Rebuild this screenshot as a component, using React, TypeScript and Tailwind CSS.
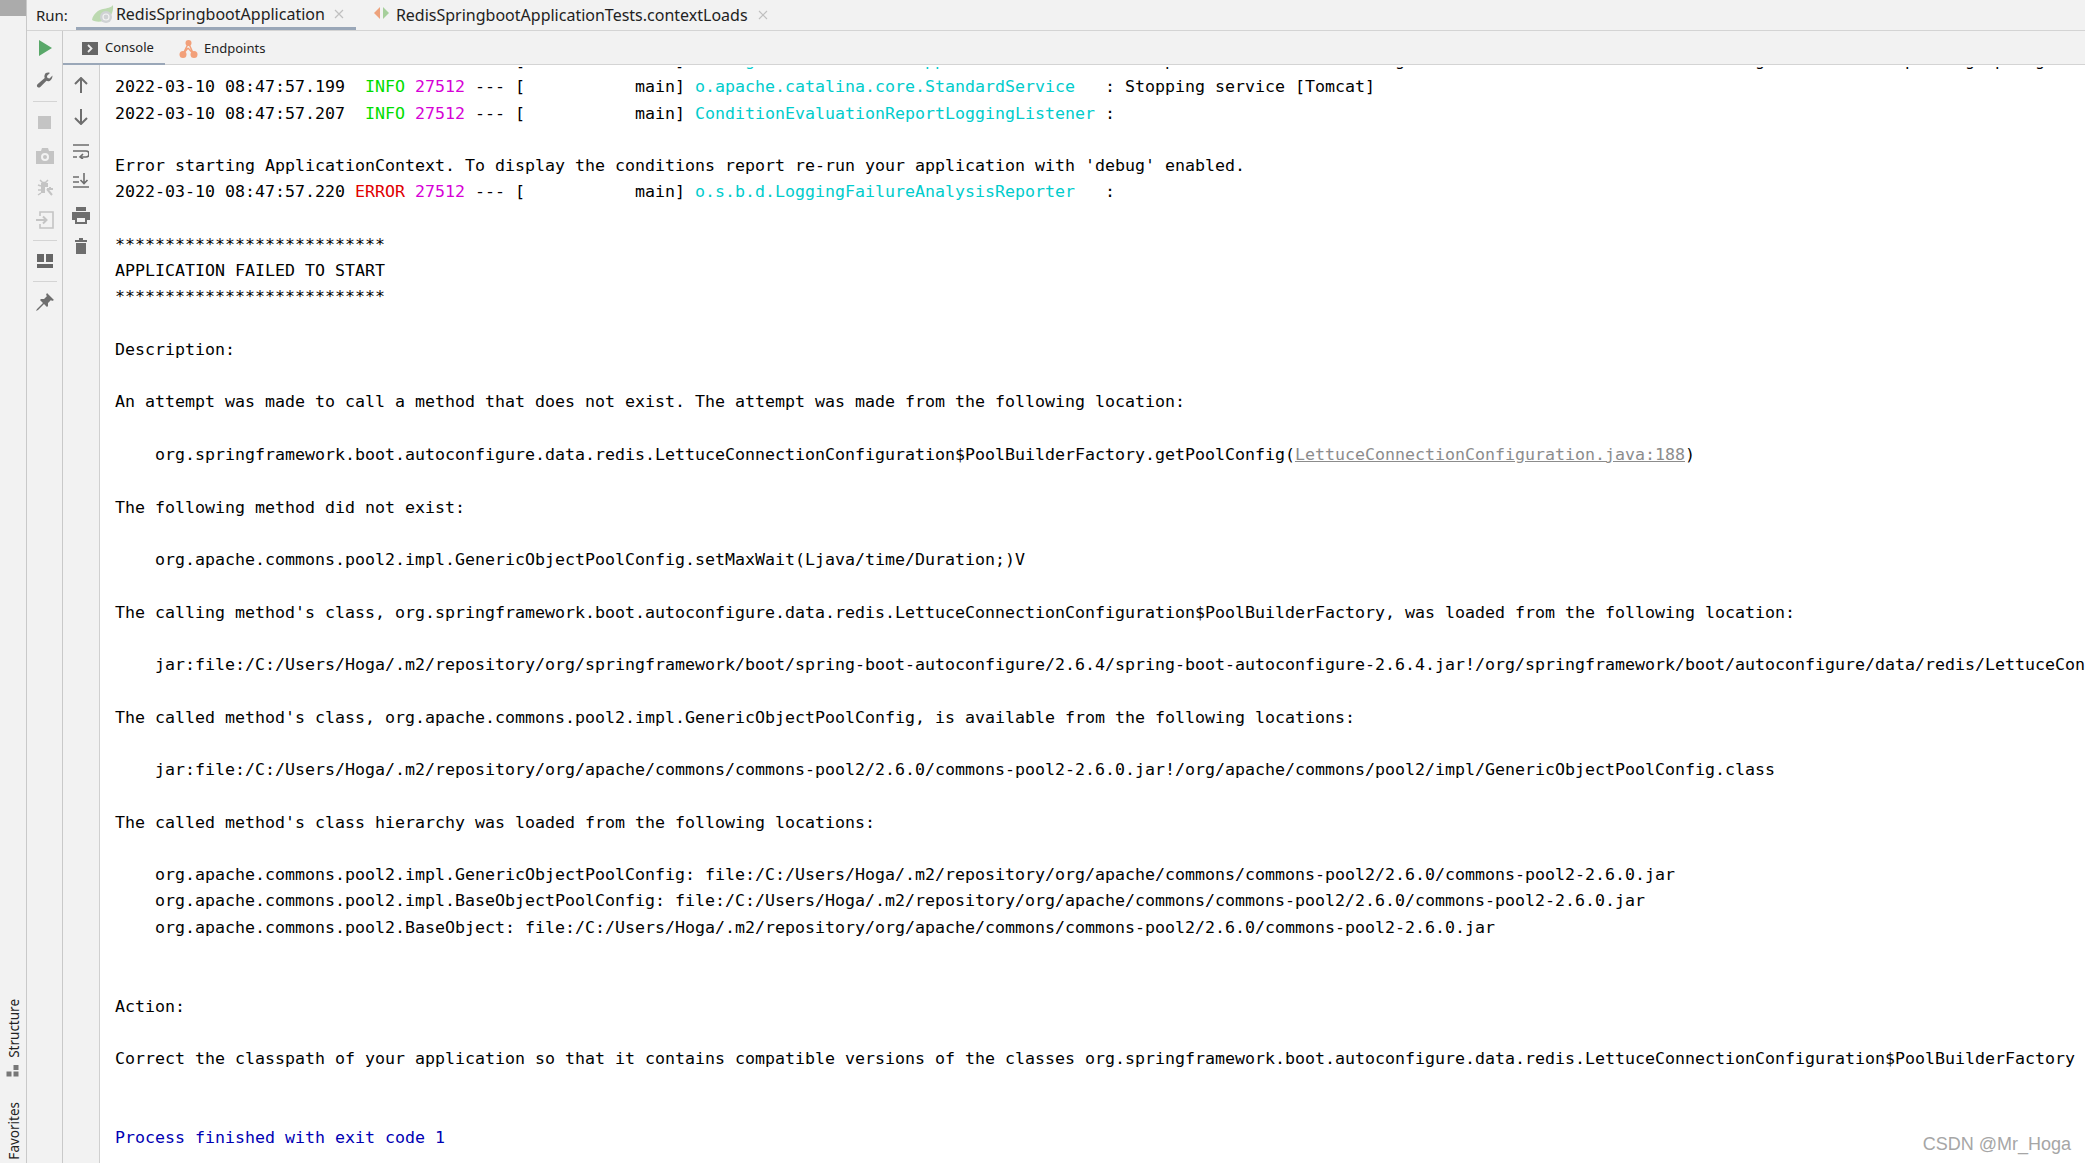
import type { ReactNode } from "react";

const ui = "font-['Noto_Sans',sans-serif]";

function Sep() {
  return <div className="w-6 h-px bg-[#d4d4d4]" />;
}

function Tab({ icon, label }: { icon: ReactNode; label: string }) {
  return (
    <div className="flex items-center h-full">
      {icon}
      <span className="text-[16px] text-[#222]">{label}</span>
    </div>
  );
}

function CloseX({ className }: { className: string }) {
  return (
    <svg width="10" height="10" viewBox="0 0 10 10" className={className} fill="none" stroke="#c0c0c0" strokeWidth="1.2">
      <path d="M1 1l8 8M9 1l-8 8" />
    </svg>
  );
}

function LogLine({ time, level, levelColor, logger, msg }: { time: string; level: string; levelColor: string; logger: string; msg: string }) {
  return (
    <div>
      {time} <span className={levelColor}>{level}</span> <span className="text-[#d600d6]">27512</span> --- [           main] <span className="text-[#00cccc]">{logger}</span>{msg}
    </div>
  );
}

const Blank = () => <div>&nbsp;</div>;

export default function App() {
  return (
    <div className={`relative flex w-[2085px] h-[1163px] overflow-hidden bg-white ${ui}`}>
      {/* tool window stripe */}
      <div className="w-[27px] shrink-0 flex flex-col bg-[#f2f2f2] border-r border-[#c9c9c9]">
        <div className="w-[26px] h-4 bg-[#ababab]" />
        <div className="mt-auto flex flex-col items-center pb-[3px] pl-[4px] text-[13.5px] text-[#222]">
          <div className="[writing-mode:vertical-rl] rotate-180 leading-none">Structure</div>
          <svg width="14" height="12" viewBox="0 0 14 12" className="mt-[8px] mb-[25px] -ml-[4px]" fill="#777">
            <rect x="0.5" y="6.5" width="5" height="5" />
            <rect x="7.5" y="6.5" width="5" height="5" />
            <rect x="7.5" y="0" width="5" height="5" />
          </svg>
          <div className="[writing-mode:vertical-rl] rotate-180 leading-none">Favorites</div>
        </div>
      </div>

      <div className="flex-1 min-w-0 flex flex-col">
        {/* run tabs */}
        <div className="h-[31px] shrink-0 flex items-center bg-[#f2f2f2] border-b border-[#d4d4d4] relative">
          <span className="ml-[9px] text-[15px] text-[#222]">Run:</span>
          <div className="ml-[8px] w-[280px] h-full flex items-center border-b-[3px] border-[#9aa7b8] pl-[16px] pt-[1px]">
            <Tab
              label="RedisSpringbootApplication"
              icon={
                <svg width="22" height="20" viewBox="0 0 22 20" className="mr-[2px]">
                  <path d="M21 1c-2 3-6 3-10 4C6 6 1 10 0 16c3 2 8 2 11 1 6-2 11-7 10-16z" fill="#bcd9b0" />
                  <circle cx="14" cy="13" r="6" fill="#cfd2d4" />
                  <circle cx="14" cy="13" r="3" fill="none" stroke="#f2f2f2" strokeWidth="1.200" />
                </svg>
              }
            />
            <CloseX className="ml-[9px]" />
          </div>
          <div className="ml-[18px] flex items-center h-full">
            <Tab
              label="RedisSpringbootApplicationTests.contextLoads"
              icon={
                <svg width="15" height="14" viewBox="0 0 15 14" className="mr-[7px] -mt-[4px]">
                  <path d="M6 1v12L0 7z" fill="#eda27c" />
                  <path d="M9 1v12l6-6z" fill="#a6cf9b" />
                </svg>
              }
            />
            <CloseX className="ml-[10px]" />
          </div>
        </div>

        <div className="flex-1 min-h-0 flex">
          {/* run actions */}
          <div className="w-[36px] shrink-0 flex flex-col items-center bg-[#f2f2f2] border-r border-[#c9c9c9]">
            <svg width="14" height="16" viewBox="0 0 14 16" className="mt-[9px]"><path d="M1 0l13 8-13 8z" fill="#59a869" /></svg>
            <svg width="18" height="18" viewBox="0 0 18 18" className="mt-[16px]"><path d="M16.5 3.5l-3 3-2-.6-.6-2 3-3c-2.300-.8-4.600 0-5.300 2-.4 1.100-.3 2.200.1 3.100L1.500 12.200c-.8.8-.8 2 0 2.800s2 .8 2.800 0l6.200-6.200c.9.400 2 .5 3.100.1 2-.7 2.800-3.100 2.900-5.400z" fill="#6e6e6e" /></svg>
            <div className="mt-[11px]"><Sep /></div>
            <div className="mt-[14px] w-[13px] h-[13px] bg-[#c4c4c4]" />
            <svg width="18" height="16" viewBox="0 0 18 16" className="mt-[19px]" fill="#c4c4c4"><path fillRule="evenodd" d="M0 3h5l1-3h6l1 3h5v13H0zM9 5a4 4 0 100 8 4 4 0 000-8zm0 2a2 2 0 110 4 2 2 0 010-4z" /></svg>
            <svg width="18" height="18" viewBox="0 0 18 18" className="mt-[15px]"><path d="M4 1l2.500 2.500h3L12 1M2 6l3 1M2 11h3M2 16l3-2" stroke="#c4c4c4" strokeWidth="1.500" fill="none" /><path d="M5 4h7v4H9v6H5z" fill="#c4c4c4" /><path d="M11 10l6 0M14 8v2M11 10l5 6" stroke="#c4c4c4" strokeWidth="2" fill="none" /></svg>
            <svg width="18" height="18" viewBox="0 0 18 18" className="mt-[14px]" fill="none" stroke="#c4c4c4" strokeWidth="1.600"><path d="M4 5V1h13v16H4v-4" /><path d="M0 9h10M7 5.500L10.500 9 7 12.500" strokeWidth="2" /></svg>
            <div className="mt-[11px]"><Sep /></div>
            <svg width="16" height="14" viewBox="0 0 16 14" className="mt-[13px]" fill="#666"><path d="M0 0h7v8H0zM9 0h7v8H9zM0 10h16v4H0z" /></svg>
            <div className="mt-[13px]"><Sep /></div>
            <svg width="18" height="18" viewBox="0 0 18 18" className="mt-[11px]"><path d="M11 0l7 7-2 1-1-1-3 3 0 3-1 1-3-3-6 6-2 1 1-2 6-6-3-3 1-1 3 0 3-3-1-1z" fill="#6e6e6e" /></svg>
          </div>

          <div className="flex-1 min-w-0 flex flex-col">
            {/* console tabs */}
            <div className="h-[34px] shrink-0 flex bg-[#f2f2f2] border-b border-[#d4d4d4]">
              <div className="w-[102px] h-[34px] flex items-center pl-[19px] pt-[2px] border-b-2 border-[#9aa7b8]">
                <svg width="16" height="13" viewBox="0 0 16 13" className="mr-[7px]"><rect width="16" height="13" fill="#666" /><path d="M6 3l3.500 3.500L6 10" stroke="#eee" strokeWidth="1.800" fill="none" /></svg>
                <span className="text-[13px] text-[#222]">Console</span>
              </div>
              <div className="flex items-center ml-[14px] pt-[2px]">
                <svg width="19" height="20" viewBox="0 0 19 20" className="mr-[6px]" fill="none"><path d="M9.500 4L4 15M9.500 4l5 11M4 15l5-6M14.500 15L9 9" stroke="#f2a07a" strokeWidth="1.500" /><circle cx="9.500" cy="4" r="3" fill="#f2a07a" /><circle cx="4" cy="15.500" r="3.500" fill="#f2a07a" /><circle cx="15" cy="15.500" r="3.500" fill="#f2a07a" /></svg>
                <span className="text-[13px] text-[#222]">Endpoints</span>
              </div>
            </div>

            <div className="flex-1 min-h-0 flex">
              {/* console actions */}
              <div className="w-[37px] shrink-0 flex flex-col items-center bg-[#f2f2f2] border-r border-[#d0d0d0]">
                <svg width="14" height="16" viewBox="0 0 14 16" className="mt-[12px]" fill="none" stroke="#6e6e6e" strokeWidth="2"><path d="M7 16V1M1 7l6-6 6 6" /></svg>
                <svg width="14" height="16" viewBox="0 0 14 16" className="mt-[16px]" fill="none" stroke="#6e6e6e" strokeWidth="2"><path d="M7 0v15M1 9l6 6 6-6" /></svg>
                <svg width="16" height="15" viewBox="0 0 16 15" className="mt-[19px]" fill="none" stroke="#6e6e6e" strokeWidth="1.600"><path d="M0 1h16M0 7h13a2.500 2.500 0 010 6H8M0 13h4" /><path d="M10 10l-3 3 3 2" /></svg>
                <svg width="16" height="15" viewBox="0 0 16 15" className="mt-[14px]" fill="none" stroke="#6e6e6e" strokeWidth="1.600"><path d="M0 14h16M0 4h6M0 9h6M11 0v10M7.500 7l3.500 3.500L14.500 7" /></svg>
                <svg width="18" height="17" viewBox="0 0 18 17" className="mt-[19px]" fill="#6e6e6e"><path fillRule="evenodd" d="M4 0h10v4H4zM0 5h18v8h-3v4H3v-4H0zM5 11v4h8v-4z" /></svg>
                <svg width="12" height="16" viewBox="0 0 12 16" className="mt-[14px]" fill="#6e6e6e"><path d="M0 2h4V0h4v2h4v2H0zM1 5h10v11H1z" /></svg>
              </div>

              {/* console output */}
              <div className="flex-1 min-w-0 overflow-hidden bg-white">
                <pre className="pl-[15px] font-['DejaVu_Sans_Mono',monospace] text-[16.61px] leading-[26.26px] text-black whitespace-pre">
                  {/* line scrolled mostly out of view: only the descenders show */}
                  <div className="h-[9.26px] overflow-hidden">
                    <div className="-mt-[17px] [clip-path:inset(19px_0_0_0)]">
                      <LogLine time="2022-03-10 08:47:57.186" level=" WARN" levelColor="text-[#00dd00]" logger="ConfigServletWebServerApplicationContext" msg=" : Exception encountered during context initialization - cancelling refresh attempt: org.springframework.beans" />
                    </div>
                  </div>
                  <LogLine time="2022-03-10 08:47:57.199" level=" INFO" levelColor="text-[#00dd00]" logger="o.apache.catalina.core.StandardService" msg="   : Stopping service [Tomcat]" />
                  <LogLine time="2022-03-10 08:47:57.207" level=" INFO" levelColor="text-[#00dd00]" logger="ConditionEvaluationReportLoggingListener" msg=" : " />
                  <Blank />
                  <div>Error starting ApplicationContext. To display the conditions report re-run your application with 'debug' enabled.</div>
                  <LogLine time="2022-03-10 08:47:57.220" level="ERROR" levelColor="text-[#e00000]" logger="o.s.b.d.LoggingFailureAnalysisReporter" msg="   : " />
                  <Blank />
                  <div>***************************</div>
                  <div>APPLICATION FAILED TO START</div>
                  <div>***************************</div>
                  <Blank />
                  <div>Description:</div>
                  <Blank />
                  <div>An attempt was made to call a method that does not exist. The attempt was made from the following location:</div>
                  <Blank />
                  <div>    org.springframework.boot.autoconfigure.data.redis.LettuceConnectionConfiguration$PoolBuilderFactory.getPoolConfig(<span className="text-[#8c8c8c] underline">LettuceConnectionConfiguration.java:188</span>)</div>
                  <Blank />
                  <div>The following method did not exist:</div>
                  <Blank />
                  <div>    org.apache.commons.pool2.impl.GenericObjectPoolConfig.setMaxWait(Ljava/time/Duration;)V</div>
                  <Blank />
                  <div>The calling method's class, org.springframework.boot.autoconfigure.data.redis.LettuceConnectionConfiguration$PoolBuilderFactory, was loaded from the following location:</div>
                  <Blank />
                  <div>    jar:file:/C:/Users/Hoga/.m2/repository/org/springframework/boot/spring-boot-autoconfigure/2.6.4/spring-boot-autoconfigure-2.6.4.jar!/org/springframework/boot/autoconfigure/data/redis/LettuceConnectionConfiguration$PoolBuilderFactory.class</div>
                  <Blank />
                  <div>The called method's class, org.apache.commons.pool2.impl.GenericObjectPoolConfig, is available from the following locations:</div>
                  <Blank />
                  <div>    jar:file:/C:/Users/Hoga/.m2/repository/org/apache/commons/commons-pool2/2.6.0/commons-pool2-2.6.0.jar!/org/apache/commons/pool2/impl/GenericObjectPoolConfig.class</div>
                  <Blank />
                  <div>The called method's class hierarchy was loaded from the following locations:</div>
                  <Blank />
                  <div>    org.apache.commons.pool2.impl.GenericObjectPoolConfig: file:/C:/Users/Hoga/.m2/repository/org/apache/commons/commons-pool2/2.6.0/commons-pool2-2.6.0.jar</div>
                  <div>    org.apache.commons.pool2.impl.BaseObjectPoolConfig: file:/C:/Users/Hoga/.m2/repository/org/apache/commons/commons-pool2/2.6.0/commons-pool2-2.6.0.jar</div>
                  <div>    org.apache.commons.pool2.BaseObject: file:/C:/Users/Hoga/.m2/repository/org/apache/commons/commons-pool2/2.6.0/commons-pool2-2.6.0.jar</div>
                  <Blank />
                  <Blank />
                  <div>Action:</div>
                  <Blank />
                  <div>Correct the classpath of your application so that it contains compatible versions of the classes org.springframework.boot.autoconfigure.data.redis.LettuceConnectionConfiguration$PoolBuilderFactory</div>
                  <Blank />
                  <Blank />
                  <div className="text-[#0000b4]">Process finished with exit code 1</div>
                </pre>
              </div>
            </div>
          </div>
        </div>
      </div>

      {/* watermark */}
      <div className="absolute right-[14px] bottom-[5px] text-[18px] text-[#a6a6a6] font-['Liberation_Sans',sans-serif]">CSDN @Mr_Hoga</div>
    </div>
  );
}
